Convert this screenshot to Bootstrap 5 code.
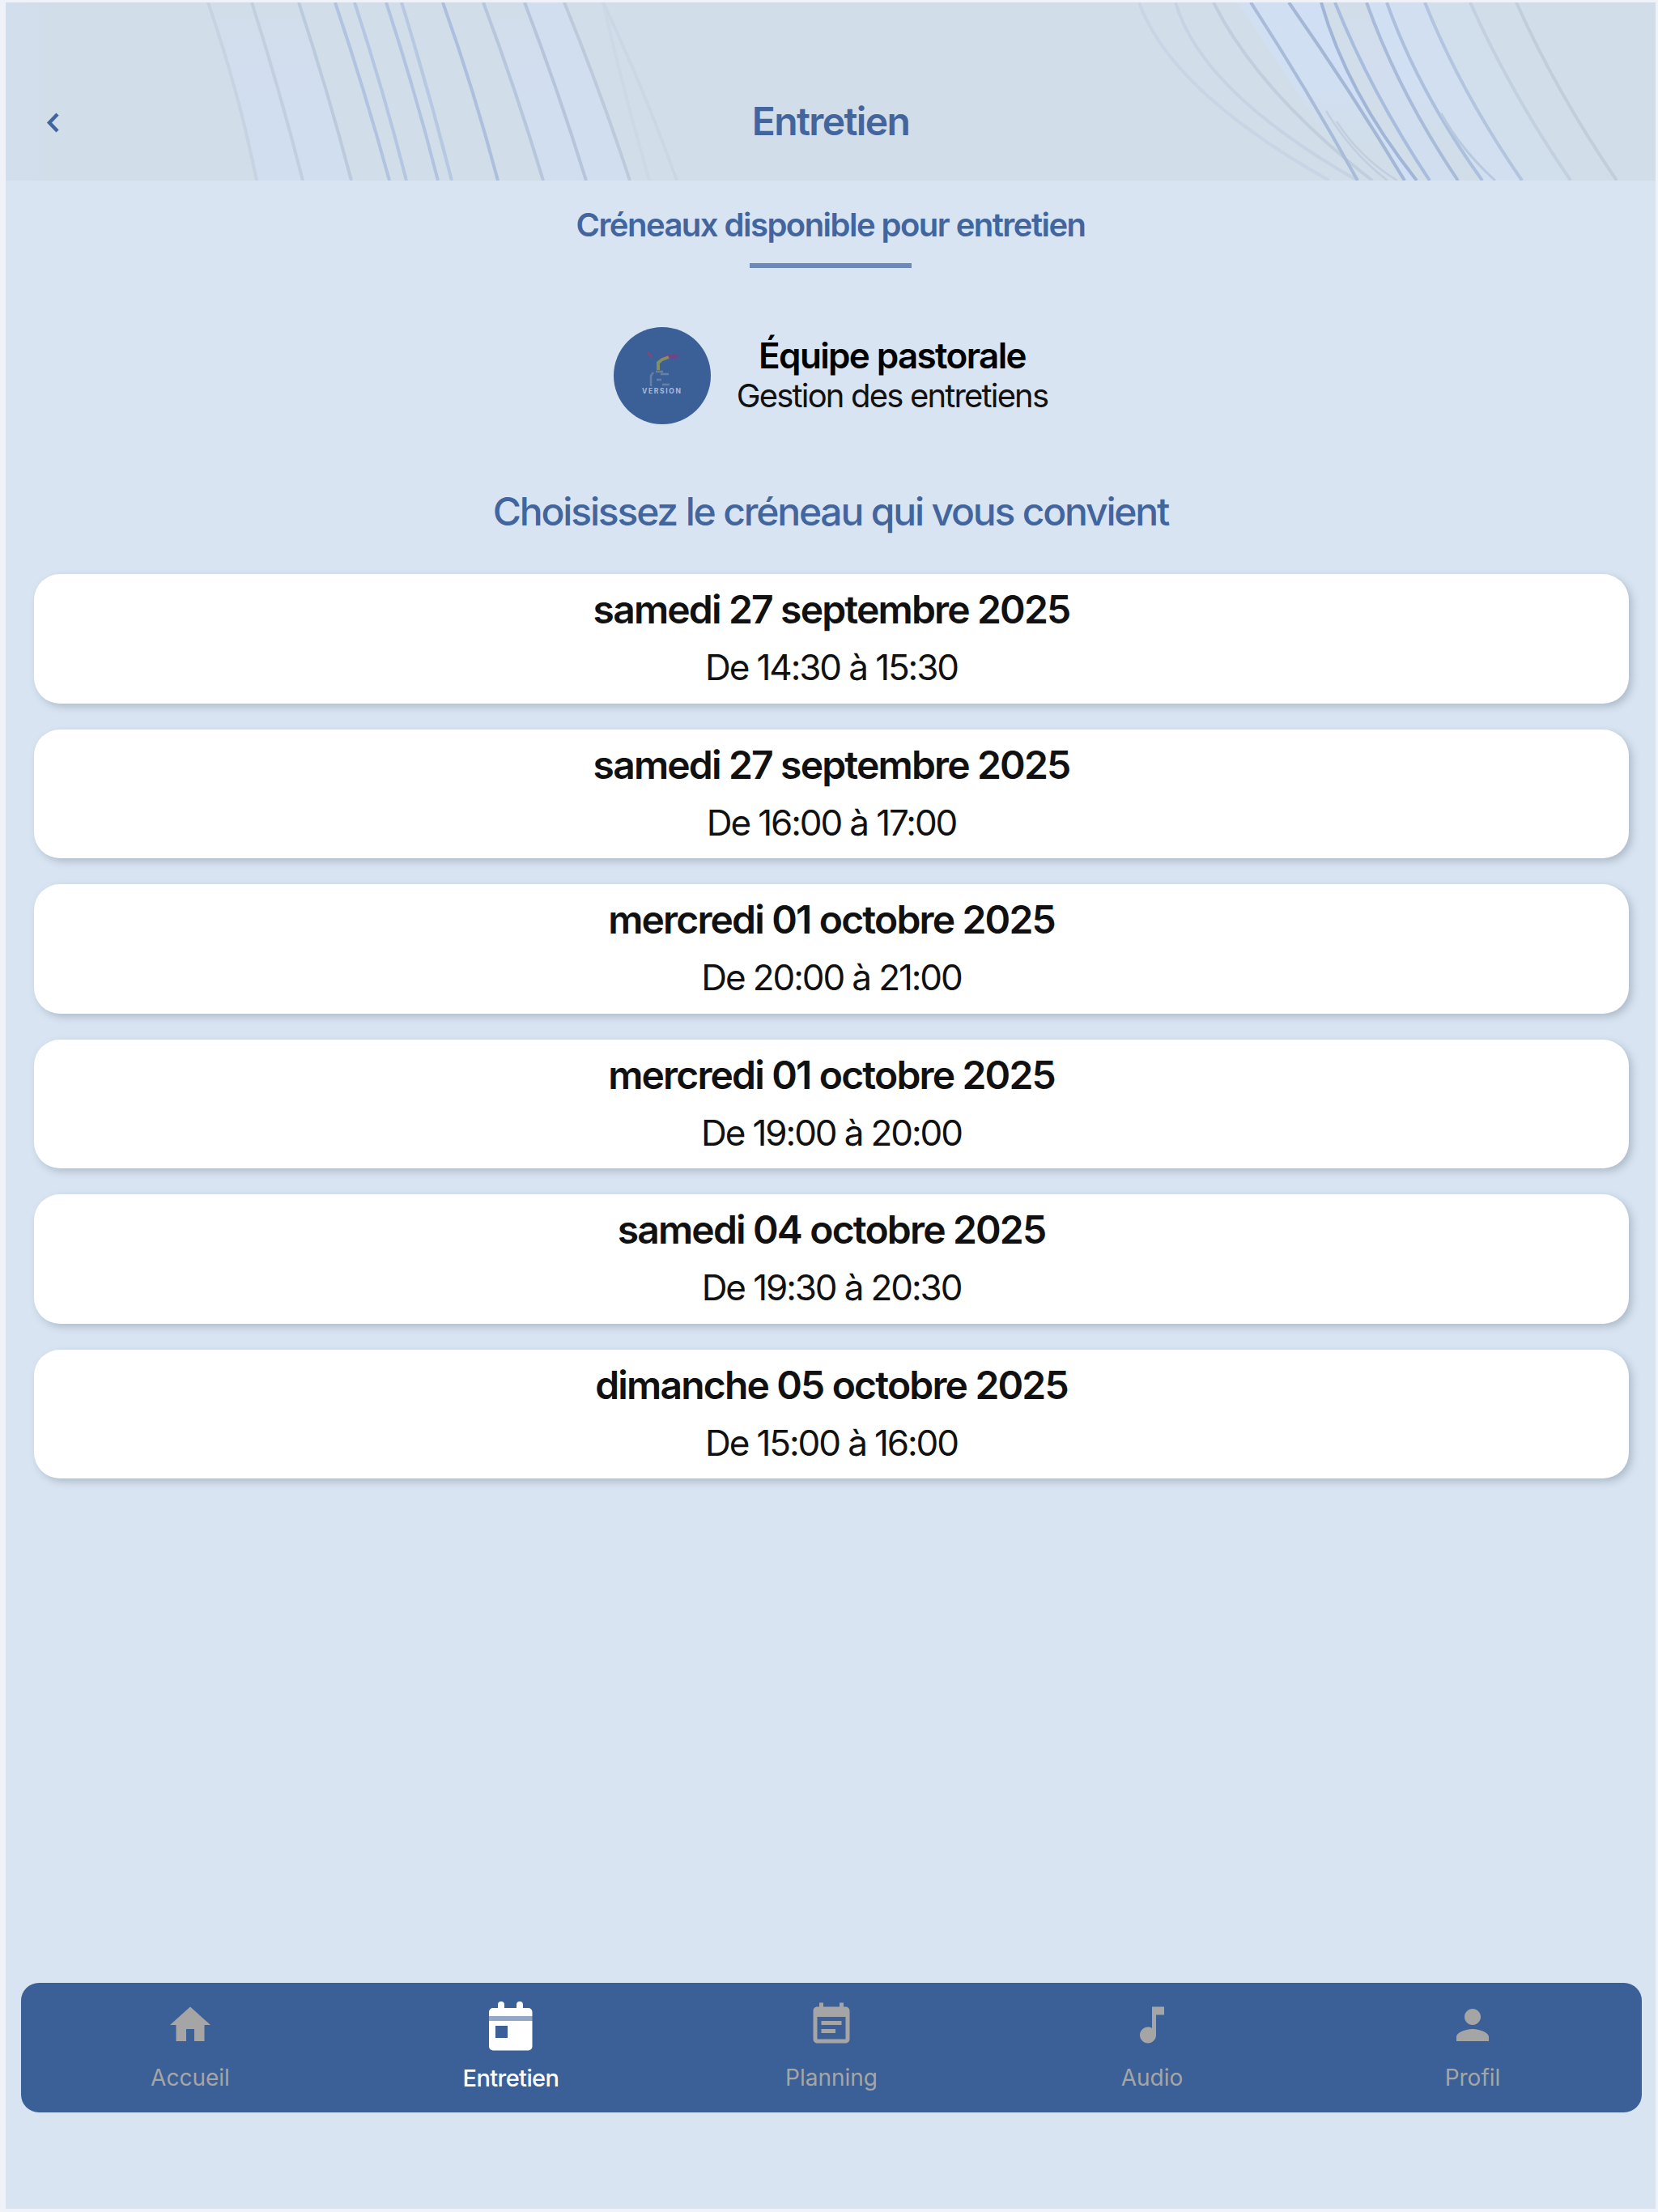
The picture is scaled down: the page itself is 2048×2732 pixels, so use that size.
<!DOCTYPE html>
<html lang="fr">
  <head>
    <meta charset="utf-8" />
    <meta name="viewport" content="width=device-width" />
    <title>Entretien</title>
    <link
      href="https://cdn.jsdelivr.net/npm/bootstrap@5.3.3/dist/css/bootstrap.min.css"
      rel="stylesheet"
    />
    <style>
      :root {
        --brand: #3b6097;
        --brand-text: #42659e;
        --page: #d8e4f2;
      }

      body {
        font-family: Inter, 'Liberation Sans', sans-serif;
        background: #eff3f9;
        color: #111;
      }

      .screen {
        height: 2732px;
        padding: 3px 3px 4px 7px;
      }

      .app {
        background: var(--page);
      }

      .app-header {
        height: 220px;
        padding: 117px 0 0 0;
        color: var(--brand-text);
        background: #d1dde8;
      }

      .header-art {
        position: absolute;
        inset: 0;
        width: 100%;
        height: 100%;
      }

      .back-btn {
        left: 47px;
        top: 130px;
        width: 24px;
        line-height: 0;
        color: var(--brand-text);
      }

      .app-title {
        font-size: 48px;
        line-height: 60px;
        font-weight: 600;
        letter-spacing: -1.6px;
      }

      .section-title {
        font-size: 40px;
        line-height: 48px;
        font-weight: 600;
        letter-spacing: -1.53px;
        color: var(--brand-text);
        margin-top: 31px;
      }

      .title-rule {
        width: 200px;
        height: 6px;
        margin-top: 23px;
        background: #6b8ab8;
      }

      .team {
        margin-top: 73px;
        gap: 32px;
      }

      .team-name {
        font-size: 44px;
        line-height: 50px;
        font-weight: 600;
        letter-spacing: -1.65px;
        color: #000;
      }

      .team-role {
        font-size: 40px;
        line-height: 50px;
        letter-spacing: -1.83px;
      }

      .choose {
        font-size: 48px;
        line-height: 58px;
        font-weight: 500;
        letter-spacing: -2.18px;
        color: var(--brand-text);
        margin-top: 79px;
      }

      .slots {
        margin-top: 48px;
        padding: 0 33px 0 35px;
        gap: 32px;
      }

      .slot {
        height: 159.5px;
        border-radius: 32px;
        padding-top: 15px;
        box-shadow: 4px 4px 10px rgba(80, 95, 110, 0.3);
      }

      .slot-date {
        font-size: 48px;
        line-height: 58px;
        font-weight: 600;
        letter-spacing: -1.83px;
      }

      .slot-time {
        font-size: 44px;
        line-height: 54px;
        font-weight: 400;
        letter-spacing: -2.1px;
        margin-top: 15px;
      }

      .tab-bar {
        height: 160px;
        margin: 0 17px 119px 19px;
        padding: 0 11px;
        border-radius: 22px;
        background: var(--brand);
      }

      .tab-item {
        color: #a5a5a5;
        font-size: 28px;
        line-height: 34px;
        padding-top: 22px;
      }

      .tab-item svg {
        width: 60px;
        height: 60px;
      }

      .tab-item span {
        margin-top: 18px;
      }

      .tab-item.active {
        color: #fff;
        font-size: 29px;
        font-weight: 500;
        letter-spacing: -0.6px;
        padding-top: 20px;
      }

      .tab-item.active svg {
        width: 66px;
        height: 66px;
      }

      .tab-item.active span {
        margin-top: 15px;
      }
    </style>
  </head>

  <body>
    <div class="screen">
      <div class="app d-flex flex-column h-100">
        <header class="app-header position-relative text-center flex-shrink-0">
          <svg class="header-art" viewBox="7 3 2038 220" preserveAspectRatio="none" fill="none">
            <defs>
              <linearGradient id="fade" x1="0" y1="0" x2="0" y2="1">
                <stop offset="0" stop-color="#d1def0" stop-opacity="0.1" />
                <stop offset="0.5" stop-color="#d1def0" />
              </linearGradient>
              <linearGradient id="fadeOut" x1="0" y1="0" x2="0" y2="1">
                <stop offset="0" stop-color="#d1dff3" />
                <stop offset="0.5" stop-color="#d1dff2" />
                <stop offset="0.8" stop-color="#d0dded" stop-opacity="0.3" />
              </linearGradient>
              <linearGradient id="edge" x1="0" y1="0" x2="1" y2="0">
                <stop offset="0" stop-color="#d1deed" />
                <stop offset="1" stop-color="#d1dde8" stop-opacity="0" />
              </linearGradient>
            </defs>
            <rect x="7" y="3" width="120" height="220" fill="url(#edge)" />
            <path fill="url(#fade)" d="M257 3Q296 113 317 223H374Q345 113 311 3Z" />
            <path fill="url(#fade)" d="M311 3Q345 113 374 223H434Q404 113 369 3Z" />
            <path fill="url(#fade)" d="M597 3Q638 113 671 223H724Q690 113 648 3Z" />
            <path fill="#d1def0" d="M648 3Q690 113 724 223H778Q740 113 697 3Z" />
            <path fill="url(#fadeOut)" d="M1530 3Q1600 113 1677 223H1735Q1669 113 1592 3Z" />
            <path fill="#d0dff4" d="M1592 3Q1669 113 1735 223H1750Q1663 113 1632 3Z" />
            <path fill="url(#fade)" d="M1649 3Q1693 113 1766 223H1801Q1727 113 1688 3Z" />
            <path fill="url(#fadeOut)" d="M1688 3Q1727 113 1801 223H1831Q1752 113 1713 3Z" />
            <path fill="#d1dff0" d="M1713 3Q1752 113 1831 223H1880Q1804 113 1760 3Z" />
            <path fill="#d1deec" d="M1760 3Q1804 113 1880 223H1940Q1865 113 1816 3Z" />
            <g id="leftLines" stroke-width="4"></g>
            <g id="rightLines" stroke-width="4"></g>
            <path d="M1638 137Q1670 190 1714 223M1651 150Q1680 195 1726 223" stroke="#c3cfdf" stroke-width="2.500" />
            <path d="M1780 140Q1805 185 1847 223" stroke="#b9c9df" stroke-width="3" />
          </svg>
          <a href="#" class="back-btn position-absolute" aria-label="Retour">
            <svg width="24" height="36" viewBox="0 0 24 36" fill="none" stroke="currentColor" stroke-width="4.500">
              <path d="M17 8 7 18.500 17 29" />
            </svg>
          </a>
          <h1 class="app-title position-relative mb-0">Entretien</h1>
        </header>

        <main class="flex-grow-1 text-center">
          <h2 class="section-title mb-0">Créneaux disponible pour entretien</h2>
          <div class="title-rule mx-auto"></div>

          <div class="team d-flex justify-content-center align-items-center">
            <svg width="120" height="120" viewBox="0 0 120 120">
              <circle cx="60" cy="60" r="60" fill="#3b6097" />
              <path d="M42 31l5 6" stroke="#7c4a78" stroke-width="3" />
              <path d="M57 39l8-5h15v5H67l-8 4z" fill="#6a4789" />
              <path d="M55 53v-9l5-4 8-3" stroke="#82905f" stroke-width="4" fill="none" />
              <path d="M46 73V60l3-4M52 55h9M58 58h10M53 65h6M60 71h9" stroke="#6780a5" stroke-width="2.500" fill="none" />
              <text x="59" y="82" text-anchor="middle" font-size="8.500" font-weight="700" textLength="48" fill="#a9bcd9">VERSION</text>
            </svg>
            <div>
              <div class="team-name">Équipe pastorale</div>
              <div class="team-role">Gestion des entretiens</div>
            </div>
          </div>

          <h3 class="choose mb-0">Choisissez le créneau qui vous convient</h3>

          <div id="slotList" class="slots d-flex flex-column"></div>
        </main>

        <nav class="tab-bar d-flex flex-shrink-0">
          <a href="#" class="tab-item col d-flex flex-column align-items-center text-decoration-none">
            <svg viewBox="0 0 24 24" fill="currentColor"><path d="M10 20v-6h4v6h5v-8h3L12 3 2 12h3v8z" /></svg>
            <span>Accueil</span>
          </a>
          <a href="#" class="tab-item active col d-flex flex-column align-items-center text-decoration-none">
            <svg viewBox="0 0 66 66" fill="currentColor">
              <path d="M6 21v-5a5 5 0 0 1 5-5h6V7a4 4 0 0 1 8 0v4h15V7a4 4 0 0 1 8 0v4h6.500a5 5 0 0 1 5 5v5z" />
              <path fill-opacity="0.45" d="M6 21h53.500v6H6z" />
              <path fill-rule="evenodd" d="M6 27h53.500v31.500a5 5 0 0 1-5 5H11a5 5 0 0 1-5-5zM14 33v15h15V33z" />
            </svg>
            <span>Entretien</span>
          </a>
          <a href="#" class="tab-item col d-flex flex-column align-items-center text-decoration-none">
            <svg viewBox="0 0 24 24" fill="currentColor"><path d="M17 10H7v2h10v-2zm2-7h-1V1h-2v2H8V1H6v2H5c-1.110 0-1.990.9-1.990 2L3 19c0 1.100.89 2 2 2h14c1.100 0 2-.9 2-2V5c0-1.100-.9-2-2-2zm0 16H5V8h14v11zm-5-5H7v2h7v-2z" /></svg>
            <span>Planning</span>
          </a>
          <a href="#" class="tab-item col d-flex flex-column align-items-center text-decoration-none">
            <svg viewBox="0 0 24 24" fill="currentColor"><path d="M12 3v10.550c-.59-.34-1.270-.55-2-.55-2.210 0-4 1.790-4 4s1.790 4 4 4 4-1.790 4-4V7h4V3h-6z" /></svg>
            <span>Audio</span>
          </a>
          <a href="#" class="tab-item col d-flex flex-column align-items-center text-decoration-none">
            <svg viewBox="0 0 24 24" fill="currentColor"><path d="M12 12c2.210 0 4-1.790 4-4s-1.790-4-4-4-4 1.790-4 4 1.790 4 4 4zm0 2c-2.670 0-8 1.340-8 4v2h16v-2c0-2.660-5.330-4-8-4z" /></svg>
            <span>Profil</span>
          </a>
        </nav>
      </div>
    </div>

    <script src="https://cdn.jsdelivr.net/npm/bootstrap@5.3.3/dist/js/bootstrap.bundle.min.js"></script>
    <script>
      const slotList = document.getElementById('slotList');

      const slots = [
        { date: 'samedi 27 septembre 2025', time: 'De 14:30 à 15:30' },
        { date: 'samedi 27 septembre 2025', time: 'De 16:00 à 17:00' },
        { date: 'mercredi 01 octobre 2025', time: 'De 20:00 à 21:00' },
        { date: 'mercredi 01 octobre 2025', time: 'De 19:00 à 20:00' },
        { date: 'samedi 04 octobre 2025', time: 'De 19:30 à 20:30' },
        { date: 'dimanche 05 octobre 2025', time: 'De 15:00 à 16:00' },
      ];

      slots.forEach((slot) => {
        const item = document.createElement('div');
        item.className = 'slot bg-white flex-shrink-0';
        item.innerHTML = `<div class="slot-date">${slot.date}</div><div class="slot-time">${slot.time}</div>`;
        slotList.appendChild(item);
      });

      // top x, control x, bottom x, colour
      const leftLines = [
        [257, 295, 317, '#c7d3e1'],
        [311, 346, 374, '#c2cfdf'],
        [369, 405, 434, '#bccade'],
        [414, 451, 481, '#b1c3e0'],
        [438, 474, 502, '#b4c6e2'],
        [477, 513, 541, '#b1c3e0'],
        [496, 530, 558, '#b7c8e2'],
        [547, 586, 615, '#adbfdd'],
        [597, 638, 671, '#b6c6dd'],
        [648, 690, 724, '#b6c5db'],
        [697, 742, 778, '#bdcadc'],
        [745, 770, 802, '#cdd9e6'],
        [745, 797, 836, '#cbd7e5'],
      ];
      const rightLines = [
        [1407, 1447, 1642, '#c8d5e4'],
        [1452, 1484, 1677, '#c6d3e3'],
        [1499, 1554, 1695, '#c0cedd'],
        [1545, 1616, 1677, '#a8bbd9'],
        [1592, 1669, 1735, '#a4b7d4'],
        [1632, 1663, 1750, '#a1b6d6'],
        [1649, 1693, 1766, '#a8bddd'],
        [1688, 1727, 1801, '#a8bbd9'],
        [1713, 1752, 1831, '#acc0dd'],
        [1760, 1804, 1880, '#b2c4de'],
        [1816, 1865, 1940, '#c3d0df'],
        [1873, 1922, 1997, '#c1cfdd'],
      ];

      const drawLines = (id, lines) => {
        document.getElementById(id).innerHTML = lines
          .map(([x1, cx, x2, color]) => `<path d="M${x1} 3Q${cx} 113 ${x2} 223" stroke="${color}" />`)
          .join('');
      };

      drawLines('leftLines', leftLines);
      drawLines('rightLines', rightLines);
    </script>
  </body>
</html>
